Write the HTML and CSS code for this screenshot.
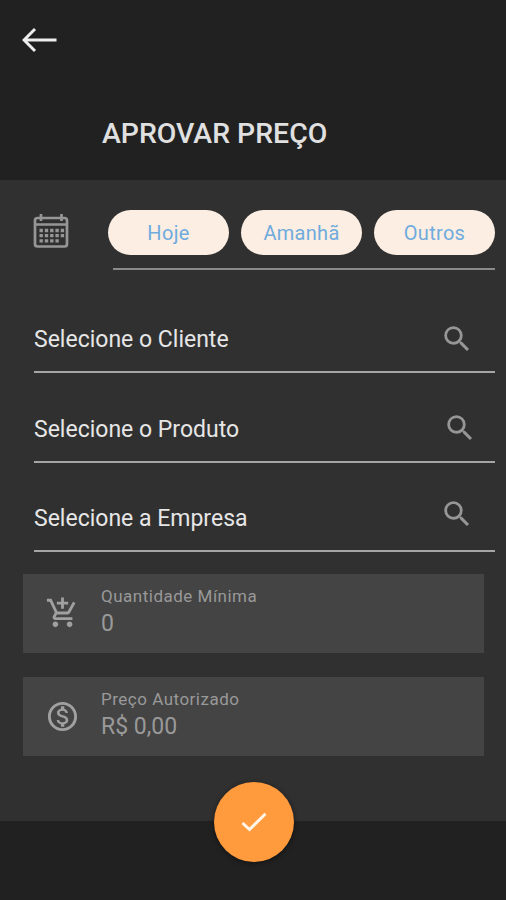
FILE: index.html
```html
<!DOCTYPE html>
<html lang="pt-BR">
<head>
    <meta charset="UTF-8">
    <meta name="viewport" content="width=device-width, initial-scale=1.0">
    <title>Aprovar Preço</title>
    <link rel="stylesheet" href="styles.css">
</head>
<body>
    <header>
        <button class="back" type="button" aria-label="Voltar">
            <svg width="36" height="26" viewBox="0 0 36 26">
                <path d="M13 2 L2 13 L13 24 M2 13 H34.5" />
            </svg>
        </button>
        <h1>APROVAR PREÇO</h1>
    </header>
    <main>
        <section class="dates">
            <svg class="calendar" width="36" height="36" viewBox="0 0 36 36">
                <rect class="frame" x="2" y="5" width="32" height="28.5" rx="2.5" />
                <path class="frame" d="M2 11.5 H34 M8 1 V8 M28.5 1 V8" />
                <path class="days" d="M6.5 17.5 H31.5" />
                <path class="days" d="M6.5 22.6 H31.5" />
                <path class="days" d="M6.5 27.8 H25.8" />
            </svg>
            <div class="pills">
                <button type="button">Hoje</button>
                <button type="button">Amanhã</button>
                <button type="button">Outros</button>
            </div>
        </section>

        <div class="field client">
            <span>Selecione o Cliente</span>
            <svg width="34" height="34" viewBox="0 0 24 24"><path d="M15.5 14h-.79l-.28-.27A6.471 6.471 0 0 0 16 9.5 6.5 6.5 0 1 0 9.5 16c1.61 0 3.09-.59 4.23-1.57l.27.28v.79l5 4.99L20.49 19l-4.99-5zm-6 0C7.01 14 5 11.99 5 9.5S7.01 5 9.5 5 14 7.01 14 9.5 11.99 14 9.5 14z"/></svg>
        </div>
        <div class="field product">
            <span>Selecione o Produto</span>
            <svg width="34" height="34" viewBox="0 0 24 24"><path d="M15.5 14h-.79l-.28-.27A6.471 6.471 0 0 0 16 9.5 6.5 6.5 0 1 0 9.5 16c1.61 0 3.09-.59 4.23-1.57l.27.28v.79l5 4.99L20.49 19l-4.99-5zm-6 0C7.01 14 5 11.99 5 9.5S7.01 5 9.5 5 14 7.01 14 9.5 11.99 14 9.5 14z"/></svg>
        </div>
        <div class="field company">
            <span>Selecione a Empresa</span>
            <svg width="34" height="34" viewBox="0 0 24 24"><path d="M15.5 14h-.79l-.28-.27A6.471 6.471 0 0 0 16 9.5 6.5 6.5 0 1 0 9.5 16c1.61 0 3.09-.59 4.23-1.57l.27.28v.79l5 4.99L20.49 19l-4.99-5zm-6 0C7.01 14 5 11.99 5 9.5S7.01 5 9.5 5 14 7.01 14 9.5 11.99 14 9.5 14z"/></svg>
        </div>

        <div class="card">
            <svg width="34" height="34" viewBox="0 0 24 24"><path d="M11 9h2V6h3V4h-3V1h-2v3H8v2h3v3zm-4 9c-1.1 0-1.99.9-1.99 2S5.9 22 7 22s2-.9 2-2-.9-2-2-2zm10 0c-1.1 0-1.99.9-1.99 2s.89 2 1.99 2 2-.9 2-2-.9-2-2-2zm-9.83-3.25l.03-.12.9-1.63h7.45c.75 0 1.41-.41 1.75-1.03l3.86-7.01L19.42 4h-.01l-1.1 2-2.76 5H8.53l-.13-.27L6.16 6l-.95-2-.94-2H1v2h2l3.6 7.59-1.35 2.45c-.16.28-.25.61-.25.96 0 1.1.9 2 2 2h12v-2H7.42c-.13 0-.25-.11-.25-.25z"/></svg>
            <div>
                <p class="label">Quantidade Mínima</p>
                <p class="value">0</p>
            </div>
        </div>
        <div class="card">
            <svg width="35" height="35" viewBox="0 0 24 24"><path d="M12 2C6.48 2 2 6.48 2 12s4.48 10 10 10 10-4.48 10-10S17.52 2 12 2zm0 18c-4.41 0-8-3.59-8-8s3.59-8 8-8 8 3.59 8 8-3.59 8-8 8zm.31-8.86c-1.77-.45-2.34-.94-2.34-1.67 0-.84.79-1.43 2.1-1.43 1.38 0 1.9.66 1.94 1.64h1.71c-.05-1.34-.87-2.57-2.49-2.97V5H10.9v1.69c-1.51.32-2.72 1.3-2.72 2.81 0 1.79 1.49 2.69 3.66 3.21 1.95.46 2.34 1.15 2.34 1.87 0 .53-.39 1.39-2.1 1.39-1.6 0-2.23-.72-2.32-1.64H8.04c.1 1.7 1.36 2.66 2.86 2.97V19h2.34v-1.67c1.52-.29 2.72-1.16 2.73-2.77-.01-2.2-1.9-2.96-3.66-3.42z"/></svg>
            <div>
                <p class="label">Preço Autorizado</p>
                <p class="value">R$ 0,00</p>
            </div>
        </div>
    </main>
    <footer>
        <button class="confirm" type="button" aria-label="Confirmar">
            <svg width="26" height="20" viewBox="0 0 26 20"><path d="M1.5 11 L8.5 17.5 L24.5 1.8" /></svg>
        </button>
    </footer>
</body>
</html>
```

FILE: styles.css
```css
* {
    box-sizing: border-box;
}
body {
    display: flex;
    flex-direction: column;
    height: 900px;
    margin: 0;
    background-color: #303030;
    font-family: Roboto, sans-serif;
}
button {
    padding: 0;
    border: none;
    font-family: inherit;
    cursor: pointer;
}
svg {
    display: block;
    flex: none;
}
header {
    height: 180px;
    padding: 27px 22px 0;
    background-color: #212121;
}
.back {
    display: block;
    background: none;
}
.back path {
    fill: none;
    stroke: #eee;
    stroke-width: 3;
}
h1 {
    margin: 64px 0 0 80px;
    color: #e0e0e0;
    font-size: 28.4px;
    font-weight: 500;
    line-height: 34px;
}
main {
    height: 641px;
    padding-top: 30px;
}
.dates {
    display: flex;
    height: 61px;
    padding: 0 11px 0 33px;
}
.calendar {
    margin-top: 3px;
}
.calendar .frame {
    fill: none;
    stroke: #969696;
    stroke-width: 2.7;
}
.calendar .days {
    fill: none;
    stroke: #969696;
    stroke-width: 3.3;
    stroke-dasharray: 3.4 1.9;
}
.pills {
    display: flex;
    gap: 12px;
    width: 387px;
    margin-left: 39px;
    background: linear-gradient(#8a8a8a, #8a8a8a) 5px 58px / 382px 2px no-repeat;
}
.pills button {
    flex: 1;
    height: 45px;
    border-radius: 23px;
    background-color: #fceee3;
    color: #70abdd;
    font-size: 20px;
    letter-spacing: 0.3px;
}
.field {
    display: flex;
    justify-content: space-between;
    margin: 0 11px 0 34px;
    border-bottom: 2px solid #a5a5a5;
    color: #e6e6e6;
    font-size: 23px;
    line-height: 28px;
}
.field svg {
    margin-right: 21px;
    fill: #969696;
}
.client {
    height: 102px;
    padding-top: 51px;
}
.client span {
    margin-top: 4px;
}
.product {
    height: 90px;
    padding-top: 38px;
}
.product span {
    margin-top: 5px;
}
.product svg {
    margin-right: 18px;
}
.company {
    height: 89px;
    padding-top: 34px;
}
.company span {
    margin-top: 8px;
}
.card {
    display: flex;
    height: 79px;
    margin: 22px 22px 24px 23px;
    padding-left: 22px;
    background-color: #444;
    color: #999;
}
.card svg {
    width: 35px;
    margin: 22px 21px 0 0;
    fill: #a0a0a0;
}
.card p {
    margin: 0;
}
.card .label {
    margin-top: 11px;
    font-size: 17px;
    letter-spacing: 0.5px;
    line-height: 22px;
}
.card .value {
    margin-top: 3px;
    font-size: 23px;
    line-height: 28px;
}
footer {
    display: flex;
    justify-content: center;
    height: 79px;
    padding-left: 1px;
    background-color: #212121;
}
.confirm {
    display: flex;
    align-items: center;
    justify-content: center;
    width: 80px;
    height: 80px;
    margin-top: -39px;
    border-radius: 50%;
    background-color: #ff9b3d;
    box-shadow: 0 1px 5px rgba(0, 0, 0, 0.5);
}
.confirm path {
    fill: none;
    stroke: #fff5e9;
    stroke-width: 3;
}
```
